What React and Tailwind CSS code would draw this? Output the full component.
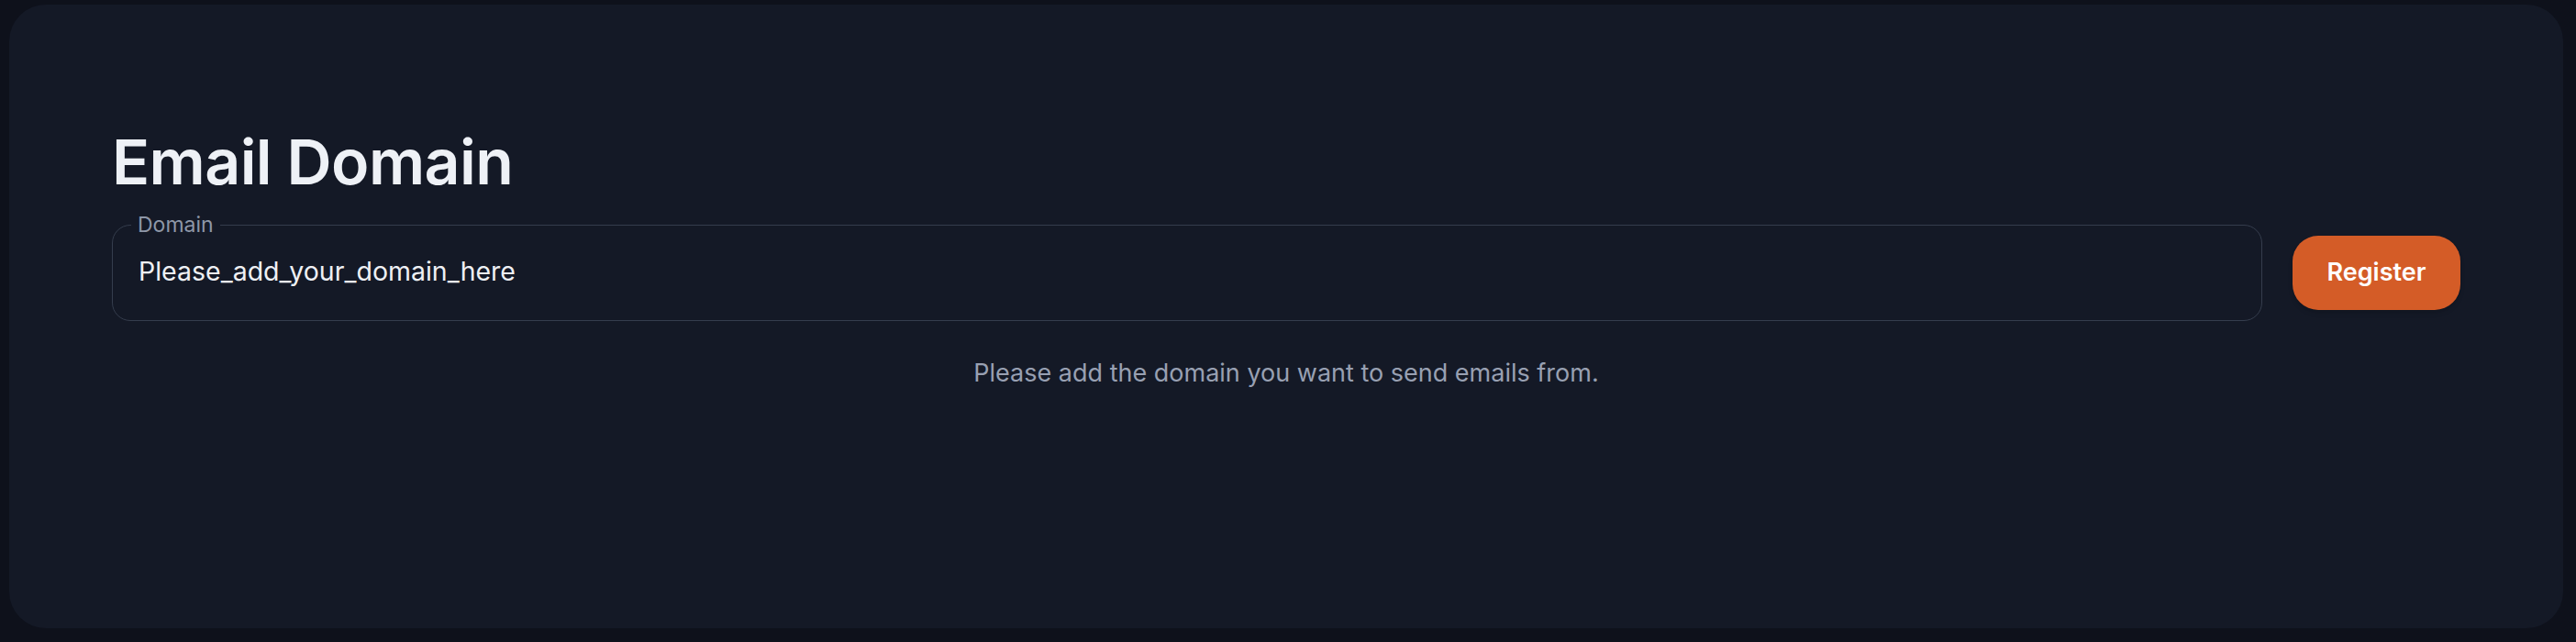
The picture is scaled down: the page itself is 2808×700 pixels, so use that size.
export default function App() {
  return (
    <div className="w-[2808px] h-[700px] bg-[#0e111b] pt-[5px] pl-[10px] pr-[14px]" style={{ fontFamily: 'Inter, "Noto Sans", sans-serif' }}>
      <div className="h-[680px] rounded-[40px] bg-[#141926] px-[112px] pt-[131px]">
        <h1 className="text-[68px] leading-[80px] font-semibold tracking-[-0.6px] text-[#eef1f6]">Email Domain</h1>
        <div className="mt-[16px] flex items-start gap-[33px]">
          <fieldset className="flex-1 h-[118px] rounded-[20px] border border-[#353d4d] pl-[20px] pr-[20px] m-0">
            <legend className="px-[7px] text-[23px] leading-[26px] text-[#8e97a8]">Domain</legend>
            <div className="pl-[8px] pt-[21px] text-[28.5px] leading-[34px] text-[#eef0f4]">Please_add_your_domain_here</div>
          </fieldset>
          <button className="mt-[25px] w-[183px] h-[81px] rounded-[28px] bg-[#d45c27] text-white text-[27px] font-semibold shadow-md">Register</button>
        </div>
        <div className="mt-[41px] text-center text-[27px] leading-[32px] text-[#98a0b2]">Please add the domain you want to send emails from.</div>
      </div>
    </div>
  );
}
